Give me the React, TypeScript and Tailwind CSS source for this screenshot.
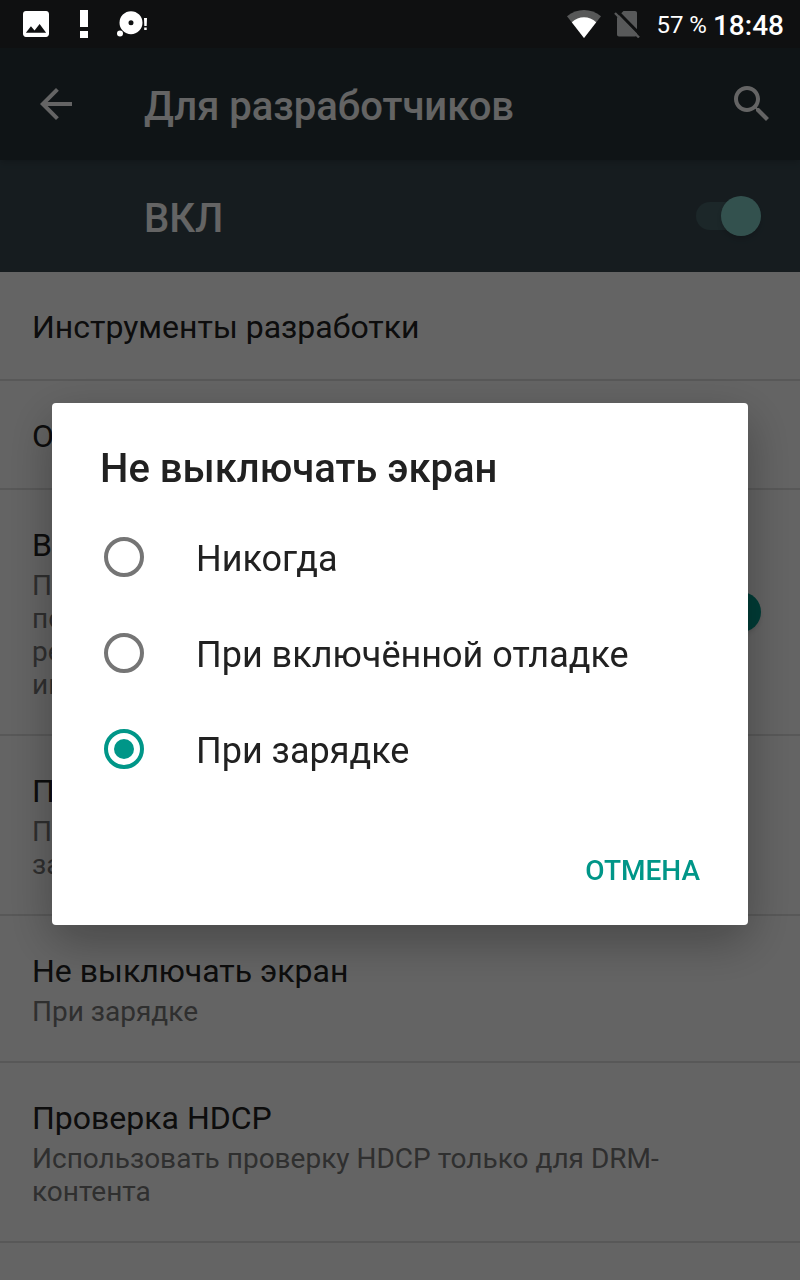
import { useState } from "react";

const preferences = [
  { title: "Инструменты разработки" },
  { title: "Отчёт об ошибке" },
  {
    title: "Включить автообновление",
    summary: "Проверять и устанавливать обновления\nпосле перезагрузки устройства в фоновом\nрежиме, если доступно подключение к сети\nинтернет",
    toggle: true,
  },
  {
    title: "Пароль для резервного копирования",
    summary: "Полные резервные копии сейчас не\nзащищены паролем",
  },
  { title: "Не выключать экран", summary: "При зарядке" },
  { title: "Проверка HDCP", summary: "Использовать проверку HDCP только для DRM-контента" },
];

const options = ["Никогда", "При включённой отладке", "При зарядке"];

function StatusBar() {
  return (
    <div className="sticky top-0 z-20 flex h-12 items-center justify-between bg-[#0f1011] pr-4 pl-[23px] text-white">
      <div className="flex items-center">
        <svg viewBox="3 3 18 18" className="size-[26px]" fill="currentColor">
          <path d="M21 19V5c0-1.1-.9-2-2-2H5c-1.1 0-2 .9-2 2v14c0 1.1.9 2 2 2h14c1.1 0 2-.9 2-2zM8.500 13.500l2.500 3.010L14.500 12l4.500 6H5l3.500-4.500z" />
        </svg>
        <svg viewBox="0 0 8 28" className="ml-[31px] h-7 w-2" fill="currentColor">
          <path d="M0 0h8v17H0zM0 21h8v7H0z" />
        </svg>
        <svg viewBox="0 0 30 28" className="ml-[29px] h-7 w-[30px]" fill="currentColor">
          <path fillRule="evenodd" d="M14 1.200a11.500 11.500 0 1 0 0 23a11.500 11.500 0 1 0 0-23zM14 10.200a2.500 2.500 0 1 1 0 5a2.500 2.500 0 1 1 0-5z" />
          <circle cx="3" cy="23.500" r="3" />
          <path d="M27 8h3l-.3 8h-2.400zM27.200 17.500h2.500v2.500h-2.500z" />
        </svg>
      </div>
      <div className="flex items-center">
        <svg viewBox="0 0 34 28" className="h-7 w-[34px]" fill="currentColor">
          <path fillOpacity="0.3" d="M17 28L0 6.200C5 2 11 0 17 0s12 2 17 6.200z" />
          <path d="M17 28L4.800 12.200C8.500 9 12.500 7.300 17 7.300s8.500 1.700 12.200 4.900z" />
        </svg>
        <svg viewBox="0 0 26 28" className="ml-[13px] h-7 w-[26px] text-[#58595a]">
          <path fill="currentColor" d="M9.500 1H21c1.200 0 2 .8 2 2v21.500c0 1.200-.8 2-2 2H5c-1.200 0-2-.8-2-2V7.500z" />
          <path stroke="#0f1011" strokeWidth="3" d="M3 1l24 24.500" />
          <path stroke="currentColor" strokeWidth="2.400" d="M1 3l24 24.500" />
        </svg>
        <span className="ml-4 pt-0.5 text-2xl">57 %</span>
        <span className="ml-1.5 pt-1 text-[28px] font-medium">18:48</span>
      </div>
    </div>
  );
}

function Switch({ id, tone }: { id: string; tone: "light" | "teal" }) {
  const colors =
    tone === "light"
      ? "before:bg-[#80cbc4]/20 after:bg-[#80cbc4]"
      : "before:bg-[#009688]/30 after:bg-[#009688]";
  return (
    <input
      id={id}
      type="checkbox"
      role="switch"
      defaultChecked
      className={`grid h-10 w-[65px] shrink-0 appearance-none items-center before:col-start-1 before:row-start-1 before:h-7 before:w-14 before:rounded-full after:col-start-1 after:row-start-1 after:size-10 after:justify-self-end after:rounded-full after:shadow-md ${colors}`}
    />
  );
}

function Header() {
  return (
    <header className="relative flex h-28 items-center bg-[#263238] pr-6 pl-8 text-[#fafafa] shadow-md">
      <button type="button" aria-label="Назад">
        <svg viewBox="0 0 24 24" className="size-12" fill="currentColor">
          <path d="M20 11H7.830l5.590-5.590L12 4l-8 8 8 8 1.410-1.410L7.830 13H20v-2z" />
        </svg>
      </button>
      <h1 className="ml-16 flex-1 pt-1.5 text-[40px] leading-12 font-medium">Для разработчиков</h1>
      <button type="button" aria-label="Поиск">
        <svg viewBox="0 0 24 24" className="size-12" fill="currentColor">
          <path d="M15.500 14h-.790l-.280-.270C15.410 12.590 16 11.110 16 9.500 16 5.910 13.090 3 9.500 3S3 5.910 3 9.500 5.910 16 9.500 16c1.610 0 3.090-.590 4.230-1.570l.270.280v.790l5 4.990L20.490 19l-4.990-5zm-6 0C7.010 14 5 11.990 5 9.500S7.010 5 9.500 5 14 7.010 14 9.500 11.990 14 9.500 14z" />
        </svg>
      </button>
    </header>
  );
}

function PreferenceList() {
  return (
    <ul>
      {preferences.map((p, i) => (
        <li key={p.title} className="flex items-center justify-between border-b-2 border-[#dcdcdc] pr-[39px] pl-8">
          <label htmlFor={p.toggle ? `pref-${i}` : undefined} className="max-w-[660px] pt-9 pb-[33px]">
            <span className="block text-[32px] leading-[38px] text-[#212121]">{p.title}</span>
            {p.summary && (
              <span className="mt-[5px] block text-[28px] leading-[33px] whitespace-pre-line text-[#757575]">
                {p.summary}
              </span>
            )}
          </label>
          {p.toggle && <Switch id={`pref-${i}`} tone="teal" />}
        </li>
      ))}
    </ul>
  );
}

function StayAwakeDialog() {
  const [selected, setSelected] = useState("При зарядке");

  return (
    <div className="fixed inset-0 z-10 flex items-center bg-black/60 px-[52px] pt-12">
      <div
        role="dialog"
        aria-labelledby="dialog-title"
        className="w-full rounded bg-white text-[#212121] shadow-[0_16px_48px_rgba(0,0,0,0.3)]"
      >
        <h2 id="dialog-title" className="px-12 pt-[42px] pb-4 text-[40px] leading-12 font-medium">
          Не выключать экран
        </h2>
        {options.map((option) => (
          <label key={option} className="flex h-24 items-center pl-[52px] text-4xl">
            <input
              type="radio"
              name="stay-awake"
              checked={selected === option}
              onChange={() => setSelected(option)}
              className="mr-[52px] grid size-10 appearance-none place-items-center rounded-full border-4 border-[#757575] checked:border-[#009688] checked:before:size-5 checked:before:rounded-full checked:before:bg-[#009688]"
            />
            <span className="pt-1">{option}</span>
          </label>
        ))}
        <div className="flex justify-end pt-9 pr-8 pb-5">
          <button type="button" className="h-[72px] px-4 pt-1 text-[28px] font-medium text-[#009688]">
            ОТМЕНА
          </button>
        </div>
      </div>
    </div>
  );
}

export default function App() {
  return (
    <div className="min-h-screen bg-[#fafafa] font-[Roboto,sans-serif]">
      <StatusBar />
      <Header />
      <div className="flex h-28 items-center justify-between bg-[#37474f] pr-[39px] pl-36">
        <label htmlFor="developer-options" className="pt-1.5 text-[40px] leading-12 font-medium text-[#fafafa]">
          ВКЛ
        </label>
        <Switch id="developer-options" tone="light" />
      </div>
      <PreferenceList />
      <StayAwakeDialog />
    </div>
  );
}
